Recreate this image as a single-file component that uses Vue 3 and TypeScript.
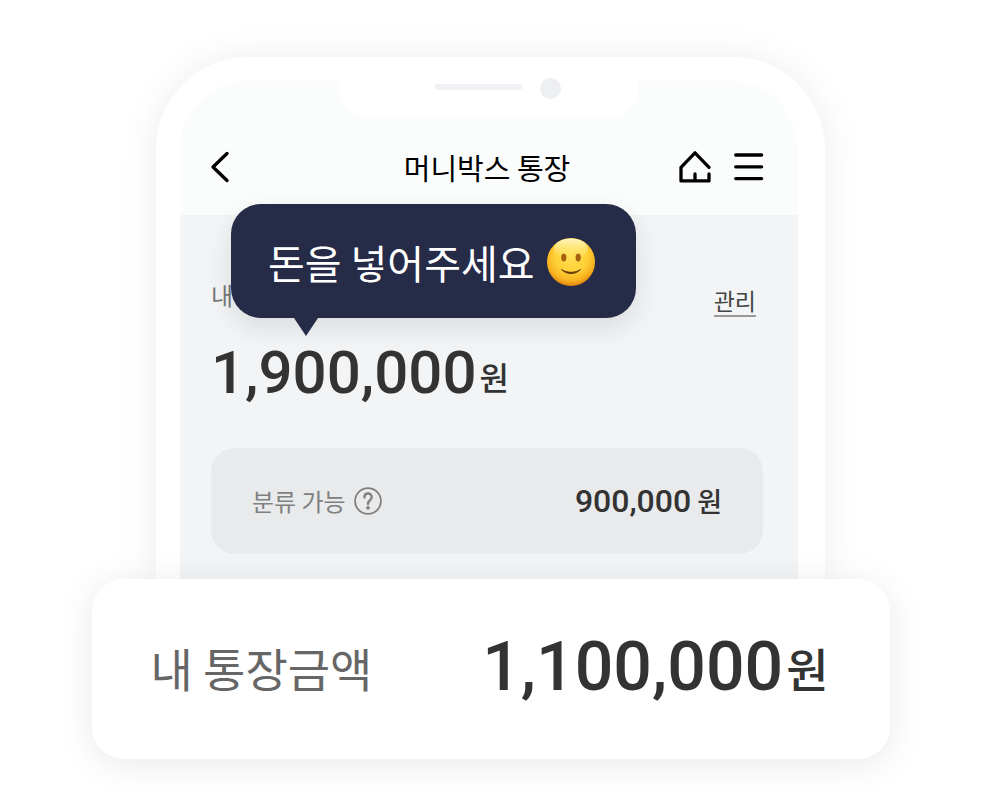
<script setup lang="ts">
interface Account {
  title: string
  label: string
  balance: number
  available: number
  stored: number
}

const account: Account = {
  title: '머니박스 통장',
  label: '내',
  balance: 1900000,
  available: 900000,
  stored: 1100000,
}

const won = (value: number): string => value.toLocaleString('en-US')
</script>

<template>
  <main class="page">
    <section class="phone">
      <div class="screen">
        <div class="notch">
          <span class="speaker"></span>
          <span class="camera"></span>
        </div>

        <header class="bar">
          <button class="icon-button back" type="button" aria-label="뒤로">
            <svg width="20" height="32" viewBox="0 0 20 32">
              <path d="M17 2.5 3 16 17 29.5" />
            </svg>
          </button>
          <h1 class="title">{{ account.title }}</h1>
          <nav class="actions">
            <button class="icon-button" type="button" aria-label="홈">
              <svg width="32" height="32" viewBox="0 0 32 32">
                <path d="M30 16.3 16 1.8 2 16.3V29.9H30V22.9M16 22.9V29.5" />
              </svg>
            </button>
            <button class="icon-button" type="button" aria-label="메뉴">
              <svg width="30" height="32" viewBox="0 0 30 32">
                <path d="M1.7 4H27.6M1.7 15.8H27.6M1.7 27.6H27.6" />
              </svg>
            </button>
          </nav>
        </header>

        <div class="body">
          <div class="top-row">
            <span class="label">{{ account.label }}</span>
            <a class="manage" href="#">관리</a>
          </div>
          <p class="balance">
            <span class="balance-number">{{ won(account.balance) }}</span>
            <span class="balance-unit">원</span>
          </p>
          <div class="available">
            <span class="available-label">
              분류 가능
              <button class="help" type="button" aria-label="도움말">
                <svg width="28" height="28" viewBox="0 0 28 28">
                  <circle cx="14" cy="14" r="12.9" />
                  <path class="mark" d="M10.4 10.4C10.4 5.1 17.7 5.2 17.7 10.2C17.7 13 14 13.300 14 17" />
                  <circle class="dot" cx="14" cy="20.800" r="1.900" />
                </svg>
              </button>
            </span>
            <span class="available-value">
              <span class="available-number">{{ won(account.available) }}</span>
              <span class="available-unit">원</span>
            </span>
          </div>

          <div class="bubble">
            <span>돈을 넣어주세요</span>
            <svg class="smile" width="50" height="50" viewBox="0 0 50 50" role="img" aria-label="미소">
              <defs>
                <radialGradient id="face" cx="0.5" cy="0.38" r="0.62">
                  <stop offset="0" stop-color="#ffe052" />
                  <stop offset="0.55" stop-color="#ffd036" />
                  <stop offset="0.82" stop-color="#f8b220" />
                  <stop offset="1" stop-color="#e0860c" />
                </radialGradient>
                <linearGradient id="shine" x1="0" y1="0" x2="0" y2="1">
                  <stop offset="0" stop-color="#fffbd0" stop-opacity="0.9" />
                  <stop offset="1" stop-color="#fff08a" stop-opacity="0" />
                </linearGradient>
              </defs>
              <circle cx="25" cy="25" r="24" fill="url(#face)" />
              <ellipse cx="25" cy="12" rx="17" ry="10.500" fill="url(#shine)" />
              <ellipse cx="17.800" cy="20.500" rx="2.600" ry="4" fill="#a5600f" />
              <ellipse cx="32.200" cy="20.500" rx="2.600" ry="4" fill="#a5600f" />
              <path d="M15.500 32.500C20.500 38 29.500 38 34.500 32.500C29.500 36.200 20.500 36.200 15.500 32.500Z" fill="#64380f" stroke="#64380f" stroke-width="0.900" stroke-linejoin="round" />
            </svg>
          </div>
        </div>
      </div>
    </section>

    <section class="card">
      <span class="card-label">내 통장금액</span>
      <span class="card-value">
        <span class="card-number">{{ won(account.stored) }}</span>
        <span class="card-unit">원</span>
      </span>
    </section>
  </main>
</template>

<style>
body {
  margin: 0;
  background: #ffffff;
}
</style>

<style scoped>
.page {
  box-sizing: border-box;
  padding: 57px 24px 51px;
  font-family: "Noto Sans CJK KR", sans-serif;
  color: #333333;
}

.phone {
  box-sizing: border-box;
  max-width: 669px;
  margin: 0 auto;
  padding: 24px 27px 0 24px;
  border-radius: 92px 92px 0 0;
  background: #ffffff;
  box-shadow: 0 2px 38px rgba(0, 0, 0, 0.08);
}

.screen {
  border-radius: 68px 68px 0 0;
  background: #fbfdfd;
}

.notch {
  position: relative;
  box-sizing: border-box;
  display: flex;
  align-items: center;
  justify-content: center;
  gap: 18px;
  width: 298px;
  height: 43px;
  margin: 0 auto;
  top: -6px;
  margin-bottom: -6px;
  padding: 0 0 16px 18px;
  border-radius: 0 0 30px 30px;
  background: #ffffff;
}

.speaker {
  width: 87px;
  height: 6px;
  margin-bottom: 3px;
  border-radius: 3px;
  background: #f0f1f4;
}

.camera {
  width: 21px;
  height: 21px;
  border-radius: 50%;
  background: #eeeff2;
}

.bar {
  box-sizing: border-box;
  display: grid;
  grid-template-columns: 1fr auto 1fr;
  align-items: center;
  height: 97px;
  padding: 0 34px 0 30px;
}

.icon-button,
.help {
  display: flex;
  padding: 0;
  border: 0;
  background: none;
  cursor: pointer;
}

.icon-button svg {
  fill: none;
  stroke: #000000;
  stroke-width: 3.3;
  stroke-linecap: round;
  stroke-linejoin: round;
}

.back {
  justify-self: start;
}

.title {
  margin: 0;
  font-size: 29px;
  font-weight: 400;
  line-height: 36px;
  color: #000000;
}

.actions {
  display: flex;
  justify-content: flex-end;
  gap: 23px;
}

.body {
  position: relative;
  padding: 70px 35px 25px 31px;
  background: #f3f4f6;
}

.top-row {
  display: flex;
  align-items: flex-start;
  justify-content: space-between;
  padding-right: 7px;
}

.label {
  font-size: 24px;
  line-height: 20px;
  color: #777777;
}

.manage {
  border-bottom: 2px solid #999999;
  font-size: 23px;
  line-height: 30px;
  color: #444444;
  text-decoration: none;
}

.balance {
  display: flex;
  align-items: flex-end;
  gap: 3px;
  margin: 26px 0 45px;
  font-weight: 500;
}

.balance-number {
  font-family: Roboto, sans-serif;
  font-size: 60px;
  line-height: 60px;
}

.balance-unit {
  font-size: 32px;
  line-height: 54px;
}

.available {
  box-sizing: border-box;
  display: flex;
  align-items: center;
  justify-content: space-between;
  height: 106px;
  padding: 0 41px;
  border-radius: 24px;
  background: #e9eaeb;
}

.available-label {
  display: flex;
  align-items: center;
  gap: 8px;
  font-size: 24px;
  line-height: 36px;
  color: #808080;
}

.help svg {
  fill: none;
  stroke: #808080;
  stroke-width: 1.8;
  stroke-linecap: round;
}

.help .mark {
  stroke-width: 2.4;
}

.help .dot {
  fill: #808080;
  stroke: none;
}

.available-value {
  display: flex;
  align-items: baseline;
  gap: 6px;
  font-weight: 500;
  line-height: 36px;
}

.available-number {
  font-family: Roboto, sans-serif;
  font-size: 32px;
}

.available-unit {
  font-size: 27px;
}

.bubble {
  position: absolute;
  top: -11px;
  left: 51px;
  box-sizing: border-box;
  display: flex;
  align-items: center;
  gap: 11px;
  width: 405px;
  height: 114px;
  padding: 2px 36px 0 37px;
  border-radius: 30px;
  background: #262b47;
  box-shadow: 0 10px 28px rgba(0, 0, 0, 0.1);
  font-size: 40px;
  line-height: 60px;
  white-space: nowrap;
  color: #ffffff;
}

.bubble::after {
  content: "";
  position: absolute;
  top: 100%;
  left: 63px;
  border: solid transparent;
  border-width: 18px 12px 0;
  border-top-color: #262b47;
}

.smile {
  flex: none;
}

.card {
  position: relative;
  box-sizing: border-box;
  display: flex;
  align-items: center;
  justify-content: space-between;
  max-width: 798px;
  height: 180px;
  margin: 0 auto;
  padding: 0 61px 4px 59px;
  border-radius: 32px;
  background: #ffffff;
  box-shadow: 0 5px 36px rgba(0, 0, 0, 0.09);
}

.card-label {
  font-size: 46px;
  line-height: 60px;
  color: #666666;
}

.card-value {
  display: flex;
  align-items: flex-end;
  gap: 3px;
  font-weight: 500;
  line-height: 60px;
}

.card-number {
  font-family: Roboto, sans-serif;
  font-size: 68px;
}

.card-unit {
  font-size: 46px;
}
</style>
